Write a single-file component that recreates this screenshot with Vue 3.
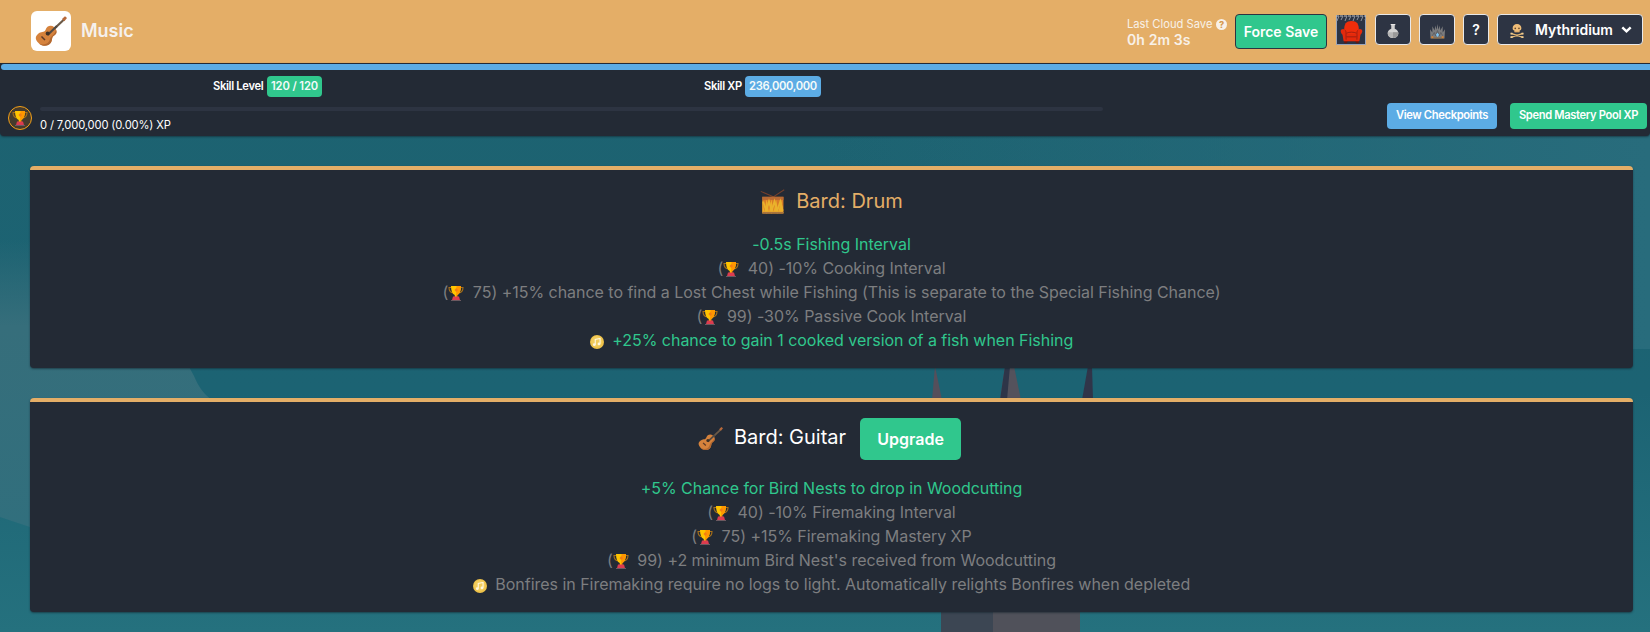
<script setup>
import { h } from 'vue'

const cards = [
  {
    name: 'Bard: Drum',
    icon: 'drum',
    active: true,
    lines: [
      { text: '-0.5s Fishing Interval', on: true },
      { level: 40, text: '-10% Cooking Interval' },
      { level: 75, text: '+15% chance to find a Lost Chest while Fishing (This is separate to the Special Fishing Chance)' },
      { level: 99, text: '-30% Passive Cook Interval' },
      { note: true, text: '+25% chance to gain 1 cooked version of a fish when Fishing', on: true },
    ],
  },
  {
    name: 'Bard: Guitar',
    icon: 'guitar',
    upgrade: true,
    lines: [
      { text: '+5% Chance for Bird Nests to drop in Woodcutting', on: true },
      { level: 40, text: '-10% Firemaking Interval' },
      { level: 75, text: '+15% Firemaking Mastery XP' },
      { level: 99, text: "+2 minimum Bird Nest's received from Woodcutting" },
      { note: true, text: 'Bonfires in Firemaking require no logs to light. Automatically relights Bonfires when depleted' },
    ],
  },
]

const art = {
  guitar: [
    ['path', { d: 'M19 14 L29 4.5', stroke: '#6b5a48', 'stroke-width': 2.2 }],
    ['path', { d: 'M27 4 L30 1.2 L32 3 L29.4 6.2Z', fill: '#b8693a' }],
    ['path', { d: 'M3 19 C6 16 9 18 10.500 15 C11.500 11 16 9.500 19 12 C22 14 22.500 18 19 20.500 C16.500 22 17.500 25 16 27.500 C13 32 7 31.500 3.500 28 C0 24.500 0 21.500 3 19Z', fill: '#d5823c' }],
    ['path', { d: 'M21 15 C22.500 18 21 19.500 18.500 21 C16.500 22.500 17.500 25 16 27.500 C13 32 7 31.500 4 28.500 C9 30.500 13.500 29 14.700 25 C15.500 20.500 20 20 21 15Z', fill: '#b26830' }],
    ['path', { d: 'M12.500 20 L22 11', stroke: '#514a43', 'stroke-width': 2.2 }],
    ['circle', { cx: 12.7, cy: 18.6, r: 2, fill: '#3d2f26' }],
    ['path', { d: 'M6.500 21.500 L10 25', stroke: '#5b3927', 'stroke-width': 1.5 }],
  ],
  drum: [
    ['path', { d: 'M1 3 L17 10 M31 1 L17 10', stroke: '#76402c', 'stroke-width': 1.3, fill: 'none' }],
    ['rect', { x: 3, y: 10, width: 27, height: 21, fill: '#d87c27' }],
    ['path', { d: 'M3 31 V13 L5.500 29 L8.500 13 L11.500 29 L14.500 13 L17.500 29 L20.500 13 L23.500 29 L27 13 L30 31Z', fill: '#efad29' }],
    ['path', { d: 'M3 12 H30', stroke: '#b96a34', 'stroke-width': 4 }],
    ['path', { d: 'M4 16 L8 28 L11.500 16 L15 28 L18.500 16 L22 28 L26 16 L29 28', stroke: '#e9b22c', 'stroke-width': 2.4, fill: 'none' }],
    ['path', { d: 'M3 30.500 H30', stroke: '#a9743c', 'stroke-width': 2.4 }],
  ],
  trophy: [
    ['path', { d: 'M8 5 H2 C2 11 4 15 11 16 M24 5 H30 C30 11 28 15 21 16', stroke: '#a87018', 'stroke-width': 2.2, fill: 'none' }],
    ['path', { d: 'M6 2 H26 C26 12 23 18 18.500 20 V25 H13.500 V20 C9 18 6 12 6 2Z', fill: '#ffc400' }],
    ['path', { d: 'M17 2 H26 C26 12 23 18 18.500 20 V25 H16Z', fill: '#ff9600' }],
    ['path', { d: 'M16.500 6 L20 10 L16.500 14 L13 10Z', fill: '#f57c12' }],
    ['path', { d: 'M10 23 H22 L24 30 H8Z', fill: '#dc3c50' }],
    ['path', { d: 'M6 31 H26', stroke: '#6c5960', 'stroke-width': 2 }],
  ],
  note: [
    ['circle', { cx: 16, cy: 16, r: 16, fill: '#eec24a' }],
    ['circle', { cx: 15, cy: 15, r: 12.5, fill: '#f2cc5c' }],
    ['path', { d: 'M12 22 V10 L23 8 V20', stroke: '#fff6dc', 'stroke-width': 2.6, fill: 'none' }],
    ['circle', { cx: 9.8, cy: 22, r: 3.2, fill: '#fff6dc' }],
    ['circle', { cx: 20.500, cy: 20.500, r: 3.2, fill: '#fff6dc' }],
  ],
  flask: [
    ['path', { d: 'M11 0 H21 V3 H20 V11 C25 13 28 17 28 21 C28 28 23 32 16 32 C9 32 4 28 4 21 C4 17 7 13 12 11 V3 H11Z', fill: '#d2d2d2' }],
    ['path', { d: 'M4 19 H28 C29 28 23 32 16 32 C9 32 3 28 4 19Z', fill: '#b4b4b4' }],
    ['path', { d: 'M16 19 H28 C29 28 23 32 16 32Z', fill: '#989898' }],
    ['path', { d: 'M11 1 H21', stroke: '#e6e6e6', 'stroke-width': 2.5 }],
  ],
  crown: [
    ['path', { d: 'M1 31 L0 11 L5 18 L5 5 L10 14 L11 3 L14 12 L16 0 L18 12 L21 3 L22 14 L27 5 L27 18 L32 11 L31 31Z', fill: '#7b7c7e' }],
    ['path', { d: 'M5 25 L9 18 L12 25 L16 14 L20 25 L23 18 L27 25', stroke: '#55565a', 'stroke-width': 1.5, fill: 'none' }],
    ['path', { d: 'M2 30 H30', stroke: '#8d6a42', 'stroke-width': 2.4 }],
    ['path', { d: 'M3 26 h4 v4 h-4Z M25 26 h4 v4 h-4Z', fill: '#d9822f' }],
    ['path', { d: 'M16 18.500 L19.500 23 L16 27.500 L12.500 23Z', fill: '#7cc4f3' }],
  ],
  skull: [
    ['path', { d: 'M4 22 L28 30 M28 22 L4 30', stroke: '#e7b973', 'stroke-width': 3.6, 'stroke-linecap': 'round' }],
    ['path', { d: 'M1 20 h5 v4 h-5Z M26 20 h5 v4 h-5Z M1 28 h5 v4 h-5Z M26 28 h5 v4 h-5Z', fill: '#f2cd90' }],
    ['path', { d: 'M16 0 C22 0 26 4 26 9 C26 12 25 14 22 15 V19 H10 V15 C7 14 6 12 6 9 C6 4 10 0 16 0Z', fill: '#efbd78' }],
    ['circle', { cx: 12, cy: 10, r: 1.8, fill: '#5d4028' }],
    ['circle', { cx: 20.500, cy: 10, r: 1.8, fill: '#5d4028' }],
    ['path', { d: 'M13 17 V20 M16 17 V20 M19 17 V20', stroke: '#a77643', 'stroke-width': 1.2 }],
  ],
  chair: [
    ['path', { d: 'M6 14 C5 4 9 0 16 0 C23 0 27 4 26 14 L24 20 H8Z', fill: '#ee2d0b' }],
    ['path', { d: 'M6 27 H26 V31 H23 L21 28 H11 L9 31 H6Z', fill: '#6b1710' }],
    ['path', { d: 'M1 14 C1 10 7 10 8.500 14 V18 H23.500 V14 C25 10 31 10 31 14 C31 16 30 18 28.500 19 L27 28 H5 L3.500 19 C2 18 1 16 1 14Z', fill: '#e42a0c' }],
    ['path', { d: 'M7.500 13 C9 15 8 18 8.500 26 M24.500 13 C23 15 24 18 23.500 26 M9 17 C13 15 19 15 23 17 M9 22 H23', stroke: '#961d11', 'stroke-width': 1.2, fill: 'none' }],
  ],
}

const Icon = (props) =>
  h('svg', { viewBox: '0 0 32 32', width: props.size, height: props.size, fill: 'none', 'aria-hidden': 'true' },
    art[props.name].map(([tag, attrs]) => h(tag, attrs)))
Icon.props = ['name', 'size']
</script>

<template>
  <div class="page">
    <svg class="scene" viewBox="0 0 1650 632" preserveAspectRatio="none" aria-hidden="true">
      <defs>
        <linearGradient id="sea" x1="0" y1="0" x2="0" y2="1">
          <stop offset="0" stop-color="#1d6270" />
          <stop offset=".62" stop-color="#1c6373" />
          <stop offset="1" stop-color="#25717e" />
        </linearGradient>
        <linearGradient id="haze" x1="0" y1="0" x2="1" y2="0">
          <stop offset=".5" stop-color="#286c7c" stop-opacity="0" />
          <stop offset="1" stop-color="#286c7c" />
        </linearGradient>
        <linearGradient id="hill" x1="0" y1="0" x2="0" y2="1">
          <stop offset="0" stop-color="#366e7b" stop-opacity="0" />
          <stop offset=".3" stop-color="#366e7b" />
          <stop offset="1" stop-color="#316f7d" />
        </linearGradient>
      </defs>
      <rect width="1650" height="632" fill="url(#sea)" />
      <rect width="1650" height="349" fill="url(#haze)" />
      <path d="M0 240 H120 C160 320 182 352 194 376 C199 388 204 394 212 400 V520 L30 527 L0 517Z" fill="url(#hill)" />
      <path d="M935 366 L942 400 H932Z" fill="#554f5b" />
      <path d="M1005 366 H1014 L1021 400 H1000Z" fill="#54525c" />
      <path d="M1005 366 H1010 L1007 400 H1000Z" fill="#2e3548" />
      <path d="M1088 366 H1092 L1093 400 H1082Z" fill="#303549" />
      <rect x="941" y="608" width="52" height="24" fill="#3c4653" />
      <rect x="993" y="608" width="87" height="24" fill="#50515a" />
    </svg>

    <header class="topbar">
      <div class="logo"><Icon name="guitar" size="32" /></div>
      <h1>Music</h1>
      <div class="save">
        <div class="save-label">Last Cloud Save <span class="help">?</span></div>
        <div class="save-time">0h 2m 3s</div>
      </div>
      <button class="force">Force Save</button>
      <div class="chair">
        <svg class="fringe" width="30" height="7" viewBox="0 0 30 7" aria-hidden="true">
          <path d="M0 1 H30" stroke="#b9bcc2" stroke-width="1" stroke-dasharray="3 1" />
          <path d="M3 1 L1 6 M7 1 L5 5 M11 1 L9 6 M15 1 L13 5 M19 1 L17 6 M23 1 L21 5 M27 1 L25 6 M30 2 L29 5" stroke="#8e939d" stroke-width="1" />
        </svg>
        <Icon name="chair" size="23" />
      </div>
      <button class="tool"><Icon name="flask" size="14" /></button>
      <button class="tool"><Icon name="crown" size="15" /></button>
      <button class="tool question">?</button>
      <button class="user">
        <Icon name="skull" size="14" />
        <span>Mythridium</span>
        <svg width="11" height="8" viewBox="0 0 11 8" fill="none" aria-hidden="true"><path d="M1.300 1.300 L5.500 5.400 L9.700 1.300" stroke="#fff" stroke-width="2.400" /></svg>
      </button>
    </header>

    <section class="status">
      <div class="xpbar"></div>
      <div class="levels">
        <div class="stat">Skill Level <span class="badge green">120 / 120</span></div>
        <div class="stat xp">Skill XP <span class="badge blue">236,000,000</span></div>
      </div>
      <div class="pool">
        <div class="medal"><Icon name="trophy" size="16" /></div>
        <div class="progress">
          <div class="track"></div>
          <div class="amount">0 / 7,000,000 (0.00%) XP</div>
        </div>
        <button class="small blue view">View Checkpoints</button>
        <button class="small green spend">Spend Mastery Pool XP</button>
      </div>
    </section>

    <main>
      <article v-for="card in cards" :key="card.name" class="card">
        <div class="title" :class="{ active: card.active, tall: card.upgrade }">
          <Icon :name="card.icon" size="25" />
          <h2>{{ card.name }}</h2>
          <button v-if="card.upgrade" class="upgrade">Upgrade</button>
        </div>
        <p v-for="line in card.lines" :key="line.text" :class="{ on: line.on }">
          <template v-if="line.level">(<Icon class="inline" name="trophy" size="16" /> {{ line.level }}) </template>
          <template v-if="line.note"><Icon class="inline" name="note" size="14" />&nbsp;</template>{{ line.text }}
        </p>
      </article>
    </main>
  </div>
</template>

<style>
html, body { margin: 0; overflow: hidden; background: #1c6373; }
</style>

<style scoped>
* { box-sizing: border-box; }
.page { position: relative; width: 1650px; height: 632px; overflow: hidden; font-family: Inter, "Liberation Sans", sans-serif; font-size: 16px; color: #fff; }
.scene { position: absolute; inset: 0; width: 100%; height: 100%; }
button { font: inherit; border: 0; padding: 0; color: #fff; font-weight: 600; white-space: nowrap; flex: none; }
h1, h2, p { margin: 0; }
svg { display: block; flex: none; }

.topbar { position: relative; display: flex; align-items: flex-start; height: 63px; padding: 0 7px 0 31px; background: #e4ae67; }
.logo { display: flex; align-items: center; justify-content: center; width: 40px; height: 40px; margin-top: 11px; border-radius: 6px; background: #fff; }
h1 { margin: 20px auto 0 10px; font-size: 18px; line-height: 22px; font-weight: 600; color: #f5f1ee; }
.save { width: 108px; margin-top: 16px; color: #f8f1e8; white-space: nowrap; }
.save-label { display: flex; align-items: center; justify-content: space-between; width: 100px; font-size: 11.200px; line-height: 16px; }
.help { display: flex; align-items: center; justify-content: center; width: 11px; height: 11px; border-radius: 50%; background: #f8f1e8; color: #d79a4f; font-size: 9px; font-weight: 800; line-height: 11px; }
.save-time { margin-top: -1px; font-size: 14px; line-height: 17px; font-weight: 600; letter-spacing: .1px; }
.force { width: 92px; height: 35px; margin-top: 14px; border: 1px solid #2d3340; border-radius: 4px; background: #30c78d; font-size: 14px; }
.chair { position: relative; display: flex; justify-content: center; width: 30px; height: 30px; margin: 15px 9px 0; padding-top: 6px; border: 1px solid #9aa5bb; border-top: 0; background: #2c3444; }
.fringe { position: absolute; top: 0; left: -1px; }
.tool, .user { display: flex; align-items: center; justify-content: center; height: 31px; margin-top: 14px; border: 1px solid #e9e9ea; border-radius: 4px; background: #2d3443; font-size: 14px; }
.tool { width: 36px; margin-right: 8px; }
.tool svg, .user svg:first-child { margin-top: 3px; }
.question { width: 26px; }
.user { width: 146px; justify-content: flex-start; padding-left: 12px; }
.user span { margin: 0 8px 0 11px; }

.status { position: relative; height: 73px; padding-top: 1px; border-radius: 0 0 4px 4px; background: #232a35; box-shadow: 0 1px 2px rgba(20, 35, 45, .6); }
.xpbar { height: 6px; margin-left: 1px; border-radius: 4px 0 0 4px; background: #5cace5; }
.levels { display: flex; height: 27px; padding: 6px 0 0 213px; }
.stat { display: flex; align-items: center; justify-content: space-between; width: 109px; height: 21px; font-size: 11.200px; font-weight: 600; letter-spacing: -.32px; line-height: 19px; white-space: nowrap; }
.stat.xp { width: 117px; margin-left: 382px; }
.badge { display: flex; align-items: center; justify-content: center; height: 21px; border-radius: 4px; color: #f4fbfa; }
.badge.green { width: 55px; letter-spacing: -.1px; }
.badge.blue { width: 76px; }
.green { background: #30c78d; }
.blue { background: #5cace5; }
.pool { display: flex; padding: 6px 3px 0 8px; }
.medal { display: flex; align-items: center; justify-content: center; width: 24px; height: 24px; margin-top: 3px; border: 1px solid #f5a117; border-radius: 50%; background: #463b2c; }
.progress { width: 1063px; margin: 4px auto 0 8px; }
.track { height: 4px; border-radius: 2px; background: #2d3442; }
.amount { margin-top: 6px; font-size: 11.200px; line-height: 16px; letter-spacing: -.15px; }
.small { height: 26px; padding-bottom: 2px; border-radius: 4px; font-size: 11.200px; letter-spacing: -.36px; }
.view { width: 110px; margin-right: 13px; }
.spend { width: 137px; }

main { position: relative; display: flex; flex-direction: column; gap: 30px; padding: 30px 17px 0 30px; }
.card { height: 202px; border-top: 4px solid #e4ae67; border-radius: 4px; background: #232a35; box-shadow: 0 1px 2px rgba(20, 35, 45, .6); text-align: center; color: #7d7e80; }
.card:last-child { height: 214px; }
.title { display: flex; align-items: center; justify-content: center; height: 62px; color: #fff; }
.title h2 { margin-left: 11px; font-size: 20px; line-height: 24px; font-weight: 400; }
.title.active { color: #e4ae67; }
.title.tall { height: 74px; padding-right: 4px; }
.title.tall h2 { margin-top: -4px; }
.title.tall svg { margin-top: -2px; }
.upgrade { width: 101px; height: 42px; margin-left: 14px; border-radius: 5px; background: #30c78d; }
p { height: 24px; line-height: 24px; letter-spacing: -.03px; white-space: nowrap; }
p.on { color: #30c78d; }
.inline { display: inline-block; margin-right: 4px; vertical-align: -3px; }
</style>
